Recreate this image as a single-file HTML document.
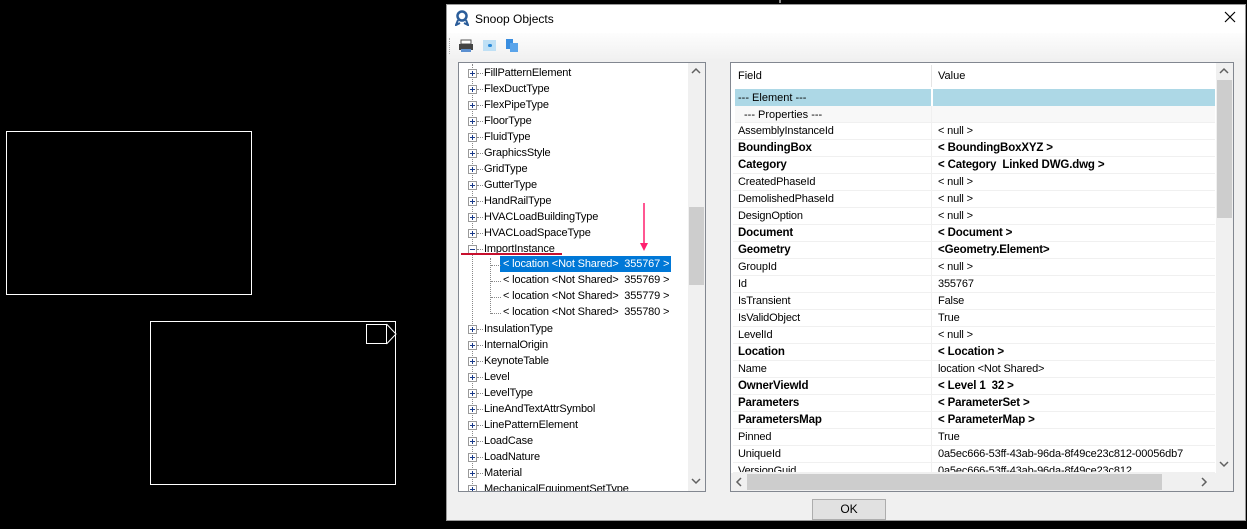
<!DOCTYPE html>
<html><head><style>
*{margin:0;padding:0;box-sizing:border-box}
body{width:1247px;height:529px;background:#000;position:relative;overflow:hidden;font-family:"Liberation Sans",sans-serif;font-size:11px;color:#000}
.a{position:absolute}
.tr{position:absolute;left:484px;height:16px;line-height:16px;white-space:nowrap;color:#000;font-size:11px;letter-spacing:-0.15px}
.bx{position:absolute;left:468px;width:9px;height:9px;border:1px solid #999;background:#fff}
.bx:before{content:"";position:absolute;left:1px;top:3px;width:5px;height:1px;background:#1a3b8a}
.bx.p:after{content:"";position:absolute;left:3px;top:1px;width:1px;height:5px;background:#1a3b8a}
.hd{position:absolute;left:477px;width:6px;border-top:1px dotted #888}
.row{position:absolute;left:733px;width:482px;height:17px;border-bottom:1px solid #f0f0f0;line-height:16px;font-size:11px;letter-spacing:-0.15px}
.row span{position:absolute;left:5px}
.row i{font-style:normal;position:absolute;left:205px}
.row.b{font-weight:bold;font-size:11.5px}
</style></head><body>
<div class="a" style="left:6px;top:131px;width:246px;height:164px;border:1px solid #fff"></div>
<div class="a" style="left:150px;top:321px;width:246px;height:164px;border:1px solid #fff"></div>
<div class="a" style="left:366px;top:324px;width:21px;height:20px;border:1px solid #fff"></div>
<svg class="a" style="left:386px;top:323px" width="12" height="22"><path d="M0.5 1 L10 11 L0.5 21" fill="none" stroke="#fff"/></svg>
<div class="a" style="left:779px;top:0;width:2px;height:3px;background:#888"></div>
<div class="a" style="left:446px;top:4px;width:800px;height:517px;background:#f0f0f0;border:1px solid #999"></div>
<div class="a" style="left:447px;top:5px;width:798px;height:28px;background:#fff"></div>
<div class="a" style="left:447px;top:33px;width:798px;height:28px;background:linear-gradient(#fdfdfd,#f0f0f0)"></div>
<svg class="a" style="left:455px;top:10px" width="14" height="16"><circle cx="7" cy="6" r="4.5" fill="none" stroke="#2b5d9a" stroke-width="2.5"/><path d="M3 10 L1 15 L5 13 M11 10 L13 15 L9 13" stroke="#2b5d9a" stroke-width="2" fill="none"/></svg>
<div class="a" style="left:475px;top:12px;font-size:12px;color:#000">Snoop Objects</div>
<svg class="a" style="left:1224px;top:11px" width="12" height="12"><path d="M1 1L11 11M11 1L1 11" stroke="#000" stroke-width="1.2"/></svg>
<div class="a" style="left:449px;top:38px;height:16px;border-left:1px dotted #aaa"></div>
<svg class="a" style="left:458px;top:39px" width="16" height="14"><rect x="3" y="1" width="10" height="4" fill="#fff" stroke="#555"/><rect x="1" y="5" width="14" height="6" fill="#444"/><rect x="3" y="10" width="10" height="3" fill="#5b8fd0"/></svg>
<div class="a" style="left:483px;top:40px;width:13px;height:11px;background:#bfe0f5"></div>
<div class="a" style="left:488px;top:44px;width:4px;height:3px;background:#2b8ad8;border-radius:2px"></div>
<svg class="a" style="left:505px;top:38px" width="14" height="15"><rect x="1" y="1" width="7" height="10" fill="#3a8ee0"/><rect x="5" y="5" width="8" height="9" fill="#5aa4ea"/></svg>
<div class="a" style="left:458px;top:62px;width:248px;height:430px;background:#fff;border:1px solid #828790"></div>
<div class="a" style="left:688px;top:63px;width:17px;height:428px;background:#f0f0f0"></div>
<div class="a" style="left:689px;top:207px;width:15px;height:78px;background:#cdcdcd"></div>
<svg class="a" style="left:691px;top:67px" width="10" height="8"><path d="M1 6L5 2L9 6" fill="none" stroke="#606060" stroke-width="1.5"/></svg>
<svg class="a" style="left:691px;top:477px" width="10" height="8"><path d="M1 2L5 6L9 2" fill="none" stroke="#606060" stroke-width="1.5"/></svg>
<div class="a" style="left:472px;top:64px;height:426px;border-left:1px dotted #888"></div>
<div class="a" style="left:490px;top:258px;height:56px;border-left:1px dotted #888"></div>
<div class="a" style="left:500px;top:256px;width:171px;height:16px;background:#0078d7"></div>
<div id="tree"></div>
<div class="a" style="left:461px;top:253px;width:101px;height:2px;background:#c8102e"></div>
<svg class="a" style="left:638px;top:203px" width="12" height="50"><path d="M6 0 L6 44" stroke="#ff1f6e" stroke-width="1.5"/><path d="M2 40 L6 48 L10 40 Z" fill="#ff1f6e"/></svg>
<div class="a" style="left:730px;top:62px;width:504px;height:430px;background:#fff;border:1px solid #828790"></div>
<div class="a" style="left:733px;top:67px;font-size:11px;line-height:18px;padding-left:5px">Field</div>
<div class="a" style="left:931px;top:65px;width:1px;height:22px;background:#e5e5e5"></div>
<div class="a" style="left:938px;top:67px;line-height:18px">Value</div>
<div class="a" style="left:735px;top:89px;width:480px;height:17px;background:#add8e6"></div>
<div class="a" style="left:931px;top:89px;width:2px;height:17px;background:#fff"></div>
<div class="a" style="left:738px;top:90px;line-height:16px">--- Element ---</div>
<div class="a" style="left:735px;top:106px;width:480px;height:17px;background:#f8f8f8;border-bottom:1px solid #f0f0f0"></div>
<div class="a" style="left:744px;top:107px;line-height:16px">--- Properties ---</div>
<div class="a" style="left:931px;top:106px;width:1px;height:367px;background:#f0f0f0"></div>
<div id="grid"></div>
<div class="a" style="left:1216px;top:63px;width:17px;height:410px;background:#f0f0f0"></div>
<div class="a" style="left:1217px;top:80px;width:15px;height:138px;background:#cdcdcd"></div>
<svg class="a" style="left:1219px;top:67px" width="10" height="8"><path d="M1 6L5 2L9 6" fill="none" stroke="#606060" stroke-width="1.5"/></svg>
<svg class="a" style="left:1219px;top:460px" width="10" height="8"><path d="M1 2L5 6L9 2" fill="none" stroke="#606060" stroke-width="1.5"/></svg>
<div class="a" style="left:731px;top:473px;width:502px;height:18px;background:#f0f0f0"></div>
<div class="a" style="left:747px;top:474px;width:415px;height:16px;background:#cdcdcd"></div>
<svg class="a" style="left:735px;top:477px" width="8" height="10"><path d="M6 1L2 5L6 9" fill="none" stroke="#606060" stroke-width="1.5"/></svg>
<svg class="a" style="left:1200px;top:477px" width="8" height="10"><path d="M2 1L6 5L2 9" fill="none" stroke="#606060" stroke-width="1.5"/></svg>
<div class="a" style="left:812px;top:499px;width:74px;height:21px;background:#e1e1e1;border:1px solid #adadad;text-align:center;line-height:19px;font-size:12px">OK</div>
<script>
var items=["FillPatternElement","FlexDuctType","FlexPipeType","FloorType","FluidType","GraphicsStyle","GridType","GutterType","HandRailType","HVACLoadBuildingType","HVACLoadSpaceType","ImportInstance",null,null,null,null,"InsulationType","InternalOrigin","KeynoteTable","Level","LevelType","LineAndTextAttrSymbol","LinePatternElement","LoadCase","LoadNature","Material","MechanicalEquipmentSetType"];
var ch=["355767","355769","355779","355780"];var h="",c=0;
for(var i=0;i<items.length;i++){var y=65+i*16;
if(items[i]===null){var t=y+8;h+='<div class="hd" style="left:491px;width:10px;top:'+t+'px"></div><div class="tr" style="left:503px;top:'+(y-1)+'px;'+(c==0?'color:#fff':'')+'">&lt; location &lt;Not Shared&gt;&nbsp; '+ch[c]+' &gt;</div>';c++;continue;}
var p=items[i]=="ImportInstance"?"":" p";
if(y+16>491){h+='<div style="position:absolute;left:459px;top:'+y+'px;width:229px;height:'+(491-y)+'px;overflow:hidden"><div class="bx p" style="left:9px;top:4px"></div><div class="tr" style="left:25px;top:0">'+items[i]+'</div></div>';continue;}
h+='<div class="bx'+p+'" style="top:'+(y+4)+'px"></div><div class="hd" style="top:'+(y+8)+'px"></div><div class="tr" style="top:'+y+'px">'+items[i]+'</div>';}
document.getElementById("tree").innerHTML=h;
var g=[["AssemblyInstanceId","< null >"],["BoundingBox","< BoundingBoxXYZ >",1],["Category","< Category  Linked DWG.dwg >",1],["CreatedPhaseId","< null >"],["DemolishedPhaseId","< null >"],["DesignOption","< null >"],["Document","< Document >",1],["Geometry","<Geometry.Element>",1],["GroupId","< null >"],["Id","355767"],["IsTransient","False"],["IsValidObject","True"],["LevelId","< null >"],["Location","< Location >",1],["Name","location <Not Shared>"],["OwnerViewId","< Level 1  32 >",1],["Parameters","< ParameterSet >",1],["ParametersMap","< ParameterMap >",1],["Pinned","True"],["UniqueId","0a5ec666-53ff-43ab-96da-8f49ce23c812-00056db7"],["VersionGuid","0a5ec666-53ff-43ab-96da-8f49ce23c812"]];
var s="";function e(x){return x.replace(/</g,"&lt;").replace(/>/g,"&gt;").replace(/  /g," &nbsp;")}
for(var j=0;j<g.length;j++){var yy=123+j*17;var hh=Math.min(17,473-yy);
s+='<div class="row'+(g[j][2]?' b':'')+'" style="top:'+yy+'px;height:'+hh+'px;overflow:hidden"><span>'+e(g[j][0])+'</span><i>'+e(g[j][1])+'</i></div>';}
document.getElementById("grid").innerHTML=s;
</script>
</body></html>
